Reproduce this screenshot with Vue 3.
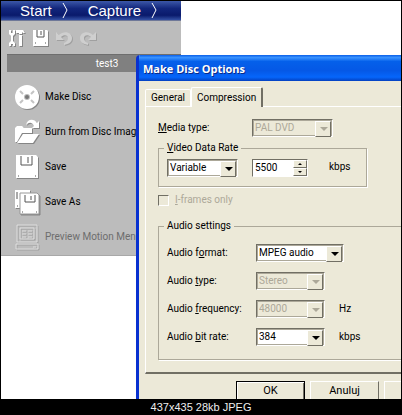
<template>
  <div class="viewer">
    <div class="shot">
      <aside class="sidebar">
        <nav class="steps">
          <a href="#start" class="step">Start</a>
          <svg class="chevron" width="6" height="17" viewBox="0 0 6 17"><path d="M1 1 L5 8 L1 16" /></svg>
          <a href="#capture" class="step second">Capture</a>
          <svg class="chevron" width="6" height="17" viewBox="0 0 6 17"><path d="M1 1 L5 8 L1 16" /></svg>
        </nav>
        <div class="toolbar">
          <button aria-label="Settings">
            <svg width="18" height="18" viewBox="0 0 18 18">
              <path d="M1 1v4l2 2v5l-2 2v3h2v-2h2v2h2v-3l-2-2V7l2-2V1H5v3H3V1z" />
              <path d="M8 1h7l2 3h-2l-1-1v2h-3V4H8z" />
              <path d="M11 6h3v11h-3z" />
            </svg>
          </button>
          <button aria-label="Save project">
            <svg width="17" height="18" viewBox="0 0 17 18">
              <path d="M1 1h14l1 1v15H1z" />
              <path class="ink" d="M5 1v7h7V1M9 2v4M3 14h1M13 14h1" />
            </svg>
          </button>
          <button aria-label="Undo" disabled>
            <svg width="18" height="16" viewBox="0 0 18 16">
              <path d="M1 2v8h8L6 7c3-3 7-2 7 1s-2 4-4 5v2c5-1 8-3 8-7 0-6-8-8-13-3z" />
            </svg>
          </button>
          <button aria-label="Redo" disabled>
            <svg width="18" height="16" viewBox="0 0 18 16">
              <path d="M17 2v8H9l3-3C9 4 5 5 5 8s2 4 4 5v2C4 14 1 12 1 8c0-6 8-8 13-3z" />
            </svg>
          </button>
        </div>
        <div class="project">test3</div>
        <ul class="actions">
          <li v-for="item in actions" :key="item.label">
            <button class="action" :disabled="item.disabled">
              <svg v-if="item.icon === 'disc'" width="26" height="26" viewBox="0 0 26 26">
                <circle cx="13" cy="13" r="12" />
                <path class="ray" d="M6 7l3 3M20 7l-3 3M6 19l3-3M20 19l-3-3" />
                <circle class="hub" cx="13" cy="13" r="3" />
                <circle class="hole" cx="13" cy="13" r="2" />
              </svg>
              <svg v-else-if="item.icon === 'folder'" width="26" height="26" viewBox="0 0 26 26">
                <path d="M1 9l2-2h5l2 2h8v5H8l-5 9H1z" />
                <path d="M9 15h16l-6 9H3z" />
                <path d="M12 6c1-6 8-7 11-2l2-2v7h-7l2-2c-2-4-5-4-8-1z" />
              </svg>
              <svg v-else-if="item.icon === 'save'" width="26" height="26" viewBox="0 0 26 26">
                <path d="M2 1h20l2 2v21H2z" />
                <path class="ink" d="M7 2v9h11V2M14 3v6M4 22h1M21 22h1" />
              </svg>
              <svg v-else-if="item.icon === 'saveas'" width="26" height="26" viewBox="0 0 26 26">
                <path d="M1 1h15v18H1z" />
                <path class="ink" d="M3 3v7M3 17h1" />
                <path class="edge" d="M6 4h17l2 2v19H6z" />
                <path class="ink" d="M11 6v7h10V6M17 7v4M8 23h1M22 23h1" />
              </svg>
              <svg v-else class="preview" width="26" height="26" viewBox="0 0 26 26">
                <path class="screen" d="M3 1h20v17H3zM6 4h14v11H6zM2 20h22v5H2z" />
                <path class="screen" d="M8 7h4M14 7h4M8 10h4M14 10h4M8 13h4M14 13h4M19 23h3" />
              </svg>
              <span>{{ item.label }}</span>
            </button>
          </li>
        </ul>
      </aside>

      <section class="dialog" role="dialog" aria-labelledby="dialog-title">
        <h1 id="dialog-title" class="titlebar">Make Disc Options</h1>
        <div class="body">
          <div class="tabs" role="tablist">
            <button
              v-for="tab in tabs"
              :key="tab"
              role="tab"
              class="tab"
              :class="{ active: tab === activeTab }"
              :aria-selected="tab === activeTab"
              @click="activeTab = tab"
            >{{ tab }}</button>
          </div>
          <div class="panel">
            <div class="row media">
              <label for="media"><u>M</u>edia type:</label>
              <span class="combo wide disabled">
                <select id="media" disabled><option>PAL DVD</option></select>
              </span>
            </div>

            <fieldset class="video">
              <legend><u>V</u>ideo Data Rate</legend>
              <span class="combo mode">
                <select v-model="mode" aria-label="Video Data Rate">
                  <option>Variable</option>
                  <option>Constant</option>
                </select>
              </span>
              <span class="spinner">
                <input id="rate" v-model.number="rate" type="text">
                <span class="arrows">
                  <button aria-label="Increase" @click="rate += 100"><i class="up"></i></button>
                  <button aria-label="Decrease" @click="rate -= 100"><i class="down"></i></button>
                </span>
              </span>
              <label for="rate" class="unit">kbps</label>
            </fieldset>

            <div class="check">
              <input id="iframes" type="checkbox" disabled>
              <label for="iframes"><u>I</u>-frames only</label>
            </div>

            <fieldset class="audio">
              <legend>Audio settings</legend>
              <div v-for="field in audio" :key="field.id" class="row">
                <label :for="field.id">Audio {{ field.pre }}<u>{{ field.key }}</u>{{ field.post }}</label>
                <span class="combo" :class="{ wide: field.wide, disabled: field.disabled }">
                  <select :id="field.id" :disabled="field.disabled"><option>{{ field.value }}</option></select>
                </span>
                <span class="unit">{{ field.unit }}</span>
              </div>
            </fieldset>
          </div>
          <div class="buttons">
            <button class="push default">OK</button>
            <button class="push">Anuluj</button>
            <button class="push" aria-label="Help"></button>
          </div>
        </div>
      </section>
    </div>
    <footer class="caption">437x435 28kb JPEG</footer>
  </div>
</template>

<script setup>
import { ref } from 'vue'

const actions = [
  { label: 'Make Disc', icon: 'disc' },
  { label: 'Burn from Disc Image', icon: 'folder' },
  { label: 'Save', icon: 'save' },
  { label: 'Save As', icon: 'saveas' },
  { label: 'Preview Motion Menu', icon: 'preview', disabled: true },
]

const tabs = ['General', 'Compression']
const activeTab = ref('Compression')
const mode = ref('Variable')
const rate = ref(5500)

const audio = [
  { id: 'format', pre: 'f', key: 'o', post: 'rmat:', value: 'MPEG audio', wide: true },
  { id: 'type', pre: '', key: 't', post: 'ype:', value: 'Stereo', disabled: true },
  { id: 'frequency', pre: '', key: 'f', post: 'requency:', value: '48000', unit: 'Hz', disabled: true },
  { id: 'bitrate', pre: '', key: 'b', post: 'it rate:', value: '384', unit: 'kbps' },
]
</script>

<style>
body {
  margin: 0;
  background: #000;
}
</style>

<style scoped>
* {
  box-sizing: border-box;
}

.viewer {
  display: flex;
  flex-direction: column;
  min-height: 100vh;
  padding: 1px 1px 0;
  background: #000;
  color: #000;
  font-family: "Liberation Sans Narrow", Roboto, sans-serif;
  font-size: 10px;
  line-height: 14px;
}

button,
input,
select {
  font: inherit;
  color: inherit;
}

.shot {
  position: relative;
  flex: 1;
  background: #fff;
  overflow: hidden;
}

.sidebar {
  width: 45%;
  background: #bcbcbc;
  border-bottom: 1px solid #a8a8a8;
}

.steps {
  display: flex;
  align-items: center;
  height: 20px;
  padding-left: 19px;
  background: linear-gradient(#3c57a8, #12267c 40%, #0a1a6c 75%, #3350a4);
  border-bottom: 1px solid #6f7898;
}

.step {
  color: #fff;
  font-family: "Liberation Sans", sans-serif;
  font-size: 15px;
  line-height: 18px;
  text-decoration: none;
  margin-right: 10px;
}

.step.second {
  margin-left: 20px;
}

.chevron path {
  fill: none;
  stroke: #fff;
}

.toolbar {
  display: flex;
  align-items: center;
  gap: 6px;
  height: 33px;
  padding-left: 7px;
}

.toolbar button {
  display: flex;
  padding: 0;
  border: none;
  background: none;
}

.toolbar svg,
.action svg {
  fill: #fff;
  filter: drop-shadow(1px 1px 0 #858585);
}

.toolbar button:disabled svg {
  fill: #cfcfcf;
  filter: drop-shadow(1px 1px 0 #a0a0a0);
}

.action svg.preview {
  filter: drop-shadow(1px 1px 0 #a0a0a0);
}

.ink {
  fill: none;
  stroke: #555;
}

.edge {
  stroke: #999;
}

.ray {
  fill: none;
  stroke: #c4c4c4;
  stroke-width: 2;
}

.hub {
  fill: #bbb;
}

.hole {
  fill: #777;
}

.screen {
  fill: none;
  stroke: #dedede;
}

.project {
  height: 18px;
  margin-left: 6px;
  padding-left: 26px;
  background: #808080;
  border-top: 1px solid #6e6e6e;
  color: #fff;
  line-height: 17px;
  text-align: center;
}

.actions {
  margin: 0;
  padding: 7px 0 1px;
  list-style: none;
}

.action {
  display: flex;
  align-items: center;
  gap: 5px;
  width: 100%;
  height: 35px;
  padding: 0 0 0 13px;
  border: none;
  background: none;
  white-space: nowrap;
}

.action:disabled {
  color: #6d6d6d;
}

.dialog {
  position: absolute;
  top: 54px;
  right: 0;
  bottom: 0;
  left: 135px;
  display: flex;
  flex-direction: column;
  border-left: 3px solid #0831d0;
  border-radius: 4px 0 0;
  background: #ece9d8;
  overflow: hidden;
}

.titlebar {
  height: 26px;
  margin: 0;
  padding-left: 4px;
  background: linear-gradient(#0a5fe8, #3a93ff 10%, #0560ea 25%, #0558e6 60%, #0566fb 85%, #0340c0);
  color: #fff;
  font-family: "Open Sans", sans-serif;
  font-size: 11px;
  line-height: 28px;
  text-shadow: 1px 1px 0 #0a2a88;
}

.body {
  display: flex;
  flex: 1;
  flex-direction: column;
  padding: 6px 0 0 6px;
}

.tabs {
  display: flex;
  align-items: flex-end;
}

.tab {
  height: 17px;
  padding: 0 5px;
  border: 1px solid #fff;
  border-bottom: none;
  border-radius: 2px 2px 0 0;
  background: #ece9d8;
  line-height: 16px;
}

.tab.active {
  z-index: 1;
  height: 20px;
  margin-bottom: -1px;
  border-right: 2px solid #716f64;
}

.panel {
  height: 268px;
  padding: 12px 0 0 12px;
  border-top: 1px solid #fff;
  border-left: 1px solid #fff;
  border-bottom: 2px solid #716f64;
}

.row {
  display: flex;
  align-items: center;
  height: 18px;
}

.row label {
  width: 89px;
}

.media label {
  width: 94px;
}

.combo {
  position: relative;
  width: 69px;
  height: 18px;
  border: 1px solid;
  border-color: #716f64 #fff #fff #716f64;
  outline: 1px solid #aca899;
  outline-offset: -2px;
  background: #fff;
}

.combo.wide {
  width: 88px;
}

.media .combo {
  width: 81px;
}

.combo.mode {
  width: 71px;
}

.combo select {
  width: 100%;
  height: 16px;
  padding: 0 0 0 2px;
  border: none;
  background: none;
  line-height: 16px;
  appearance: none;
}

.combo::before {
  content: "";
  position: absolute;
  top: 1px;
  right: 1px;
  width: 14px;
  height: 14px;
  border: 1px solid;
  border-color: #fff #716f64 #716f64 #fff;
  background: #ece9d8;
  pointer-events: none;
}

.combo::after {
  content: "";
  position: absolute;
  top: 7px;
  right: 4px;
  border: 4px solid transparent;
  border-top-color: #000;
  border-bottom: none;
  pointer-events: none;
}

.combo.disabled {
  background: #ece9d8;
  color: #aca899;
}

.combo.disabled::after {
  border-top-color: #aca899;
}

.combo select:disabled {
  opacity: 1;
}

fieldset {
  min-width: 0;
  margin: 0;
  border: 1px solid #aca899;
  box-shadow: 1px 1px 0 #fff;
}

legend {
  padding: 0 3px;
  margin-left: -3px;
}

.video {
  display: flex;
  align-items: flex-start;
  width: 209px;
  height: 46px;
  margin-top: 4px;
  padding: 4px 8px 0;
}

.spinner {
  display: flex;
  width: 56px;
  height: 18px;
  margin-left: 14px;
  border: 1px solid;
  border-color: #716f64 #fff #fff #716f64;
  background: #fff;
}

.spinner input {
  flex: 1;
  min-width: 0;
  padding: 0 0 0 2px;
  border: none;
  background: none;
}

.arrows {
  display: flex;
  flex-direction: column;
  width: 14px;
}

.arrows button {
  display: flex;
  flex: 1;
  align-items: center;
  justify-content: center;
  padding: 0;
  border: 1px solid;
  border-color: #fff #716f64 #716f64 #fff;
  background: #ece9d8;
}

.arrows i {
  border: 2px solid transparent;
}

.arrows .up {
  border-top: none;
  border-bottom-color: #000;
}

.arrows .down {
  border-bottom: none;
  border-top-color: #000;
}

.unit {
  margin-left: 14px;
}

.video .unit {
  margin-left: 21px;
  line-height: 16px;
}

.check {
  display: flex;
  align-items: center;
  gap: 6px;
  margin-top: 6px;
  color: #aca899;
}

.check input {
  width: 11px;
  height: 11px;
  margin: 0;
  border: 1px solid;
  border-color: #716f64 #fff #fff #716f64;
  appearance: none;
}

.audio {
  display: flex;
  flex-direction: column;
  gap: 10px;
  height: 141px;
  margin-top: 12px;
  padding: 11px 0 0 8px;
  border-right: none;
}

.buttons {
  display: flex;
  gap: 5px;
  height: 26px;
  padding: 7px 0 0 91px;
  overflow: hidden;
}

.push {
  flex: none;
  width: 69px;
  height: 24px;
  padding: 0 0 4px;
  border: 1px solid;
  border-color: #fff #716f64 #716f64 #fff;
  background: #ece9d8;
  font-size: 11px;
}

.push.default {
  border-color: #000;
  box-shadow: inset 1px 1px 0 #fff, inset -1px 0 0 #716f64;
}

.caption {
  height: 16px;
  color: #eee;
  font-family: "Liberation Sans", sans-serif;
  font-size: 11px;
  line-height: 16px;
  text-align: center;
}
</style>
